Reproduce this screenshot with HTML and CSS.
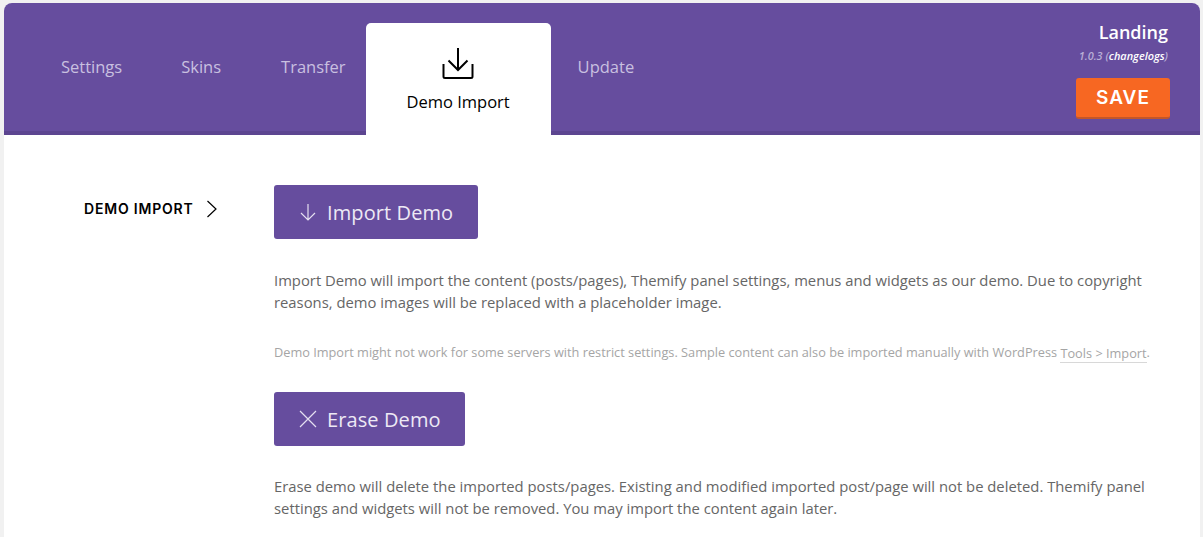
FILE: index.html
```html
<!DOCTYPE html>
<html lang="en">
  <head>
    <meta charset="utf-8" />
    <title>Demo Import</title>
    <link rel="stylesheet" href="styles.css">
  </head>
  <body>
    <div class="panel">
      <header class="topbar">
        <nav class="tabs">
          <a class="tab">Settings</a>
          <a class="tab">Skins</a>
          <a class="tab">Transfer</a>
          <a class="tab active">
            <svg class="tab-icon" width="36" height="34" viewBox="0 0 36 34" fill="none" stroke="#000" stroke-width="2">
              <path d="M18 1V23M8.500 13.500L18 23L27.500 13.500"/>
              <path d="M3.500 17V29.500Q3.500 31 5 31H31Q32.500 31 32.500 29.500V17"/>
            </svg>
            <span>Demo Import</span>
          </a>
          <a class="tab update">Update</a>
        </nav>
        <div class="meta">
          <div class="theme-name">Landing</div>
          <div class="version">1.0.3 (<a>changelogs</a>)</div>
          <button class="save">SAVE</button>
        </div>
      </header>
      <main class="content">
        <aside class="side-label">
          <span>DEMO IMPORT</span>
          <svg width="12" height="18" viewBox="0 0 12 18" fill="none" stroke="#000" stroke-width="1.200">
            <path d="M1.500 1L10 9L1.500 17"/>
          </svg>
        </aside>
        <section class="body">
          <button class="action">
            <svg width="18" height="18" viewBox="0 0 18 18" fill="none" stroke="#e4dff0" stroke-width="1.200">
              <path d="M9 1V17M2 10L9 17L16 10"/>
            </svg>
            Import Demo
          </button>
          <p class="text first">Import Demo will import the content (posts/pages), Themify panel settings, menus and widgets as our demo. Due to copyright reasons, demo images will be replaced with a placeholder image.</p>
          <p class="note">Demo Import might not work for some servers with restrict settings. Sample content can also be imported manually with WordPress <a>Tools &gt; Import</a>.</p>
          <button class="action erase">
            <svg width="18" height="18" viewBox="0 0 18 18" fill="none" stroke="#e4dff0" stroke-width="1.200">
              <path d="M1 1L17 17M17 1L1 17"/>
            </svg>
            Erase Demo
          </button>
          <p class="text last">Erase demo will delete the imported posts/pages. Existing and modified imported post/page will not be deleted. Themify panel settings and widgets will not be removed. You may import the content again later.</p>
        </section>
      </main>
    </div>
  </body>
</html>
```

FILE: styles.css
```css
html,
body {
  height: 100%;
  margin: 0;
  overflow: hidden;
  background-color: #f1f1f1;
}

body {
  padding: 3px 3px 0 4px;
  box-sizing: border-box;
  font-family: "Open Sans", sans-serif;
  color: #666;
}

.panel {
  background-color: #fff;
  height: 100%;
  border-radius: 8px 8px 0 0;
  overflow: hidden;
}

.topbar {
  display: flex;
  justify-content: space-between;
  height: 128px;
  background-color: #664d9e;
  border-bottom: 4px solid #5c4590;
}

.tabs {
  display: flex;
  align-items: flex-start;
  padding: 20px 0 0 27px;
}

.tab {
  padding: 0 30px;
  height: 88px;
  line-height: 88px;
  font-size: 16.500px;
  color: #c9c0e0;
}

.tab:first-child {
  padding-right: 29px;
}

.tab.active {
  display: flex;
  flex-direction: column;
  align-items: center;
  width: 185px;
  height: 112px;
  margin-left: -10px;
  padding: 0;
  background-color: #fff;
  border-radius: 5px 5px 0 0;
  color: #000;
  line-height: 22px;
}

.tab-icon {
  margin-top: 24px;
  margin-bottom: 10px;
}

.tab.update {
  padding-left: 27px;
}

.meta {
  display: flex;
  flex-direction: column;
  align-items: flex-end;
  padding: 18px 32px 0 0;
}

.theme-name {
  font-size: 18px;
  font-weight: 600;
  line-height: 22px;
  color: #fff;
}

.version {
  margin-top: 6px;
  font-size: 10.900px;
  font-style: italic;
  font-weight: 600;
  line-height: 14px;
  color: #b9aed6;
}

.version a {
  color: #fff;
}

.save {
  width: 94px;
  height: 41px;
  margin: 15px -2px 0 0;
  padding: 0;
  background-color: #f76722;
  border: 0;
  border-bottom: 2px solid #c2562a;
  border-radius: 3px;
  font-family: Inter, sans-serif;
  font-size: 19px;
  font-weight: 600;
  letter-spacing: 1px;
  color: #fff;
}

.content {
  display: flex;
  padding-top: 50px;
}

.side-label {
  display: flex;
  align-items: center;
  gap: 12px;
  width: 190px;
  height: 48px;
  margin-left: 80px;
  font-family: Inter, sans-serif;
  font-size: 14px;
  font-weight: 600;
  letter-spacing: 0.800px;
  color: #000;
}

.side-label span {
  margin-bottom: 2px;
}

.body {
  width: 876px;
}

.action {
  display: flex;
  align-items: center;
  gap: 10px;
  height: 54px;
  padding: 0 25px;
  background-color: #664d9e;
  border: 0;
  border-radius: 3px;
  font-family: "Open Sans", sans-serif;
  font-size: 20px;
  letter-spacing: 0.100px;
  color: #ede9f5;
}

.action.erase {
  padding-right: 24px;
}

.text {
  margin: 0;
  font-size: 14.820px;
  line-height: 22px;
  color: #666;
}

.text.first {
  margin-top: 30px;
}

.text.last {
  margin-top: 29px;
}

.note {
  margin: 28px 0 28px;
  font-size: 12.750px;
  line-height: 22px;
  white-space: nowrap;
  color: #a5a5a5;
}

.note a {
  border-bottom: 1px solid #d8d8d8;
  vertical-align: -1px;
}
```
